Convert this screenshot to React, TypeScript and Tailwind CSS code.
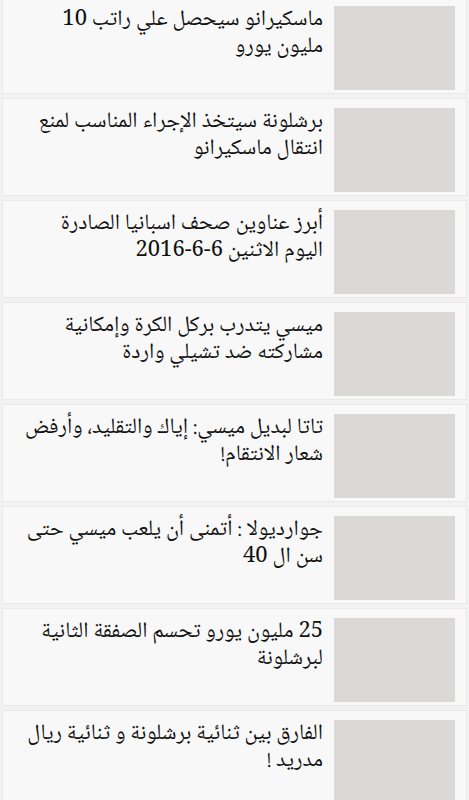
const news = [
    { id: 1, lines: ["ماسكيرانو سيحصل علي راتب 10", "مليون يورو"] },
    { id: 2, lines: ["برشلونة سيتخذ الإجراء المناسب لمنع", "انتقال ماسكيرانو"] },
    { id: 3, lines: ["أبرز عناوين صحف اسبانيا الصادرة", "اليوم الاثنين 6-6-2016"] },
    { id: 4, lines: ["ميسي يتدرب بركل الكرة وإمكانية", "مشاركته ضد تشيلي واردة"] },
    { id: 5, lines: ["تاتا لبديل ميسي: إياك والتقليد، وأرفض", "شعار الانتقام!"] },
    { id: 6, lines: ["جوارديولا : أتمنى أن يلعب ميسي حتى", "سن ال 40"] },
    { id: 7, lines: ["25 مليون يورو تحسم الصفقة الثانية", "لبرشلونة"] },
    { id: 8, lines: ["الفارق بين ثنائية برشلونة و ثنائية ريال", "مدريد !"] },
]

const NewsCard = ({ lines }: { lines: string[] }) => {
    return (
        <div className="flex flex-row-reverse items-start border border-[#e9e9e9] bg-[#f8f8f8] pt-[9px] pb-[3px] pr-[11px] pl-[6px] mb-[4px]">
            <div className="w-[121px] h-[84px] shrink-0 bg-[#dcd8d8]"></div>
            <div
                dir="rtl"
                className="flex-1 pr-[11px] pt-[1px] text-right text-[22px] leading-[27px] text-[#111]"
                style={{ fontFamily: '"Noto Naskh Arabic", "Noto Sans Arabic", "DejaVu Sans", sans-serif' }}
            >
                {lines.map((line, i) => <div key={i} className="whitespace-nowrap">{line}</div>)}
            </div>
        </div>
    )
}

export default function App() {
    return (
        <div className="w-[469px] h-[800px] overflow-hidden bg-[#f2f2f2]">
            <div className="mx-[2px] -mt-[4px]">
                {news.map(item => <NewsCard key={item.id} lines={item.lines} />)}
            </div>
        </div>
    )
}
